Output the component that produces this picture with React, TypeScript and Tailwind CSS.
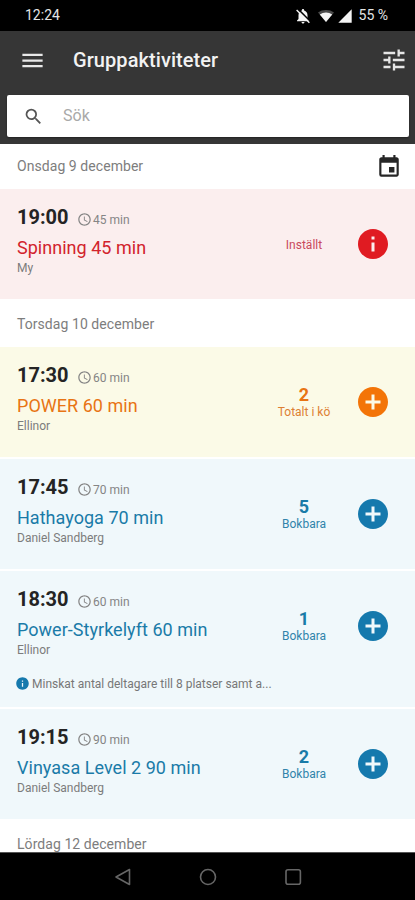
import type { ReactNode } from 'react';
import clsx from 'clsx';
import {
  MdAccessTime,
  MdAddCircle,
  MdEvent,
  MdInfo,
  MdMenu,
  MdSearch,
  MdSignalCellular4Bar,
  MdTune,
} from 'react-icons/md';

type Status = 'cancelled' | 'queue' | 'bookable';

interface Activity {
  time: string;
  duration: string;
  title: string;
  instructor: string;
  status: Status;
  count?: number;
  label: string;
  note?: string;
}

const wednesday: Activity[] = [
  { time: '19:00', duration: '45 min', title: 'Spinning 45 min', instructor: 'My', status: 'cancelled', label: 'Inställt' },
];

const thursday: Activity[] = [
  { time: '17:30', duration: '60 min', title: 'POWER 60 min', instructor: 'Ellinor', status: 'queue', count: 2, label: 'Totalt i kö' },
  { time: '17:45', duration: '70 min', title: 'Hathayoga 70 min', instructor: 'Daniel Sandberg', status: 'bookable', count: 5, label: 'Bokbara' },
  {
    time: '18:30',
    duration: '60 min',
    title: 'Power-Styrkelyft 60 min',
    instructor: 'Ellinor',
    status: 'bookable',
    count: 1,
    label: 'Bokbara',
    note: 'Minskat antal deltagare till 8 platser samt a...',
  },
  { time: '19:15', duration: '90 min', title: 'Vinyasa Level 2 90 min', instructor: 'Daniel Sandberg', status: 'bookable', count: 2, label: 'Bokbara' },
];

const rowColor: Record<Status, string> = {
  cancelled: 'bg-[#fbeeee]',
  queue: 'bg-[#fbfae7]',
  bookable: 'bg-[#f0f8fb]',
};

const textColor: Record<Status, string> = {
  cancelled: 'text-[#d2232c]',
  queue: 'text-[#e87414]',
  bookable: 'text-[#1a7ba8]',
};

const labelColor: Record<Status, string> = {
  cancelled: 'text-[#c94a5c]',
  queue: 'text-[#dd7f33]',
  bookable: 'text-[#3184ab]',
};

const iconColor: Record<Status, string> = {
  cancelled: 'text-[#e01b22]',
  queue: 'text-[#f37408]',
  bookable: 'text-[#1579ad]',
};

export default function App() {
  return (
    <div className="flex h-[900px] w-[415px] flex-col overflow-hidden bg-white font-['Roboto',sans-serif]">
      <StatusBar />
      <Header />
      <main className="min-h-0 flex-1 overflow-hidden">
        <DayHeading className="h-[45px]">
          Onsdag 9 december
          <MdEvent className="size-[26px] text-[#262626]" />
        </DayHeading>
        <ActivityList items={wednesday} />
        <DayHeading className="h-12 pt-[2px]">Torsdag 10 december</DayHeading>
        <ActivityList items={thursday} />
        <DayHeading className="h-12 pt-[2px]">Lördag 12 december</DayHeading>
      </main>
      <NavBar />
    </div>
  );
}

function StatusBar() {
  return (
    <div className="flex h-[31px] shrink-0 items-center justify-between bg-black pr-[27px] pl-[25px] text-[14px] text-[#e4e4e4]">
      <span>12:24</span>
      <div className="flex items-center">
        {/* Muted bell */}
        <svg viewBox="0 0 24 24" className="mr-[6px] size-[18px]">
          <path
            d="M12 22c1.100 0 2-.900 2-2h-4c0 1.100.900 2 2 2zm6-6v-5c0-3.070-1.640-5.640-4.500-6.320V4c0-.830-.670-1.500-1.500-1.500s-1.500.670-1.500 1.500v.680C7.630 5.360 6 7.920 6 11v5l-2 2v1h16v-1l-2-2z"
            fill="#f4f4f4"
          />
          <path d="M5.500 2.800L22 19.300" stroke="#000" strokeWidth="2" />
          <path d="M3.500 4L20.500 21" stroke="#f4f4f4" strokeWidth="1.800" />
        </svg>
        {/* Wifi fan, outer band dimmed */}
        <svg viewBox="0 0 16 12" className="mr-[3px] h-3 w-4">
          <path d="M0 2.500C4.500-.8 11.500-.8 16 2.500L8 12z" fill="#4a4a4a" />
          <path d="M1.800 4.500C5.500 1.700 10.500 1.700 14.200 4.500L8 12z" fill="#f4f4f4" />
        </svg>
        <MdSignalCellular4Bar className="mr-[6px] size-4 text-[#f4f4f4]" />
        <span>55 %</span>
      </div>
    </div>
  );
}

function Header() {
  return (
    <header className="h-[113px] shrink-0 bg-[#363636] px-[7px]">
      <div className="flex h-16 items-center pb-[6px]">
        <MdMenu className="ml-[12px] size-[27px] text-[#e8e8e8]" />
        <h1 className="ml-[27px] text-[20px] font-medium tracking-[0.07px] text-[#f2f2f2]">Gruppaktiviteter</h1>
        <MdTune className="ml-auto size-7 text-[#e6e6e6]" />
      </div>
      <div className="mr-[-1px] flex h-[42px] items-center rounded-[2px] bg-white shadow-[0_1px_2px_rgba(0,0,0,0.4)]">
        <MdSearch className="ml-[16px] size-[21px] text-[#555]" />
        <span className="ml-[19px] text-[16px] text-[#a9a9a9]">Sök</span>
      </div>
    </header>
  );
}

function DayHeading({ children, className }: { children: ReactNode; className: string }) {
  return (
    <h2 className={clsx('flex items-center justify-between pr-[13px] pl-[17px] text-[14px] tracking-[0.06px] text-[#7d7d7d]', className)}>
      {children}
    </h2>
  );
}

function ActivityList({ items }: { items: Activity[] }) {
  return (
    <ul className="flex flex-col gap-[2px]">
      {items.map((item) => (
        <ActivityRow key={item.time} item={item} />
      ))}
    </ul>
  );
}

function ActivityRow({ item }: { item: Activity }) {
  const Icon = item.status === 'cancelled' ? MdInfo : MdAddCircle;

  return (
    <li className={clsx('pl-[17px]', item.note ? 'h-[136px]' : 'h-[110px]', rowColor[item.status])}>
      <div className="flex h-[110px] items-center">
        <div className="flex h-full w-[247px] flex-col pt-4">
          <div className="flex h-6 items-center">
            <span className="w-[60px] text-[20px] font-bold text-[#242424]">{item.time}</span>
            <MdAccessTime className="mt-[4px] size-[15px] text-[#858585]" />
            <span className="mt-[5px] ml-[1px] text-[12px] text-[#858585]">{item.duration}</span>
          </div>
          <span className={clsx('mt-[6px] text-[18px] leading-[26px] tracking-[0.03px]', textColor[item.status])}>{item.title}</span>
          <span className="text-[12px] leading-[15px] text-[#7c7c7c]">{item.instructor}</span>
        </div>
        <div className={clsx('flex w-[80px] flex-col items-center pt-[2px]', textColor[item.status])}>
          {item.count && <span className="text-[18px] leading-[18px] font-bold">{item.count}</span>}
          <span className={clsx('text-[12px] leading-4', labelColor[item.status])}>{item.label}</span>
        </div>
        <Icon className={clsx('ml-[11px] size-9', iconColor[item.status])} />
      </div>
      {item.note && (
        <div className="mt-[-6px] flex items-center">
          <MdInfo className="ml-[-2px] size-[15px] shrink-0 text-[#1579ad]" />
          <span className="mt-[1px] ml-[2px] text-[12px] leading-4 whitespace-nowrap text-[#777]">{item.note}</span>
        </div>
      )}
    </li>
  );
}

function NavBar() {
  return (
    <nav className="flex h-12 shrink-0 items-center justify-center gap-[68px] border-t border-[#555] bg-black text-[#666]">
      <svg viewBox="0 0 18 18" className="size-[18px]" fill="none" stroke="currentColor" strokeWidth="1.6">
        <path d="M16.500 1.500v15L3 9z" strokeLinejoin="round" />
      </svg>
      <svg viewBox="0 0 18 18" className="size-[18px]" fill="none" stroke="currentColor" strokeWidth="1.6">
        <circle cx="9" cy="9" r="7.500" />
      </svg>
      <svg viewBox="0 0 18 18" className="size-[18px]" fill="none" stroke="currentColor" strokeWidth="1.6">
        <rect x="1" y="1.800" width="14.400" height="14.400" rx="2" />
      </svg>
    </nav>
  );
}
